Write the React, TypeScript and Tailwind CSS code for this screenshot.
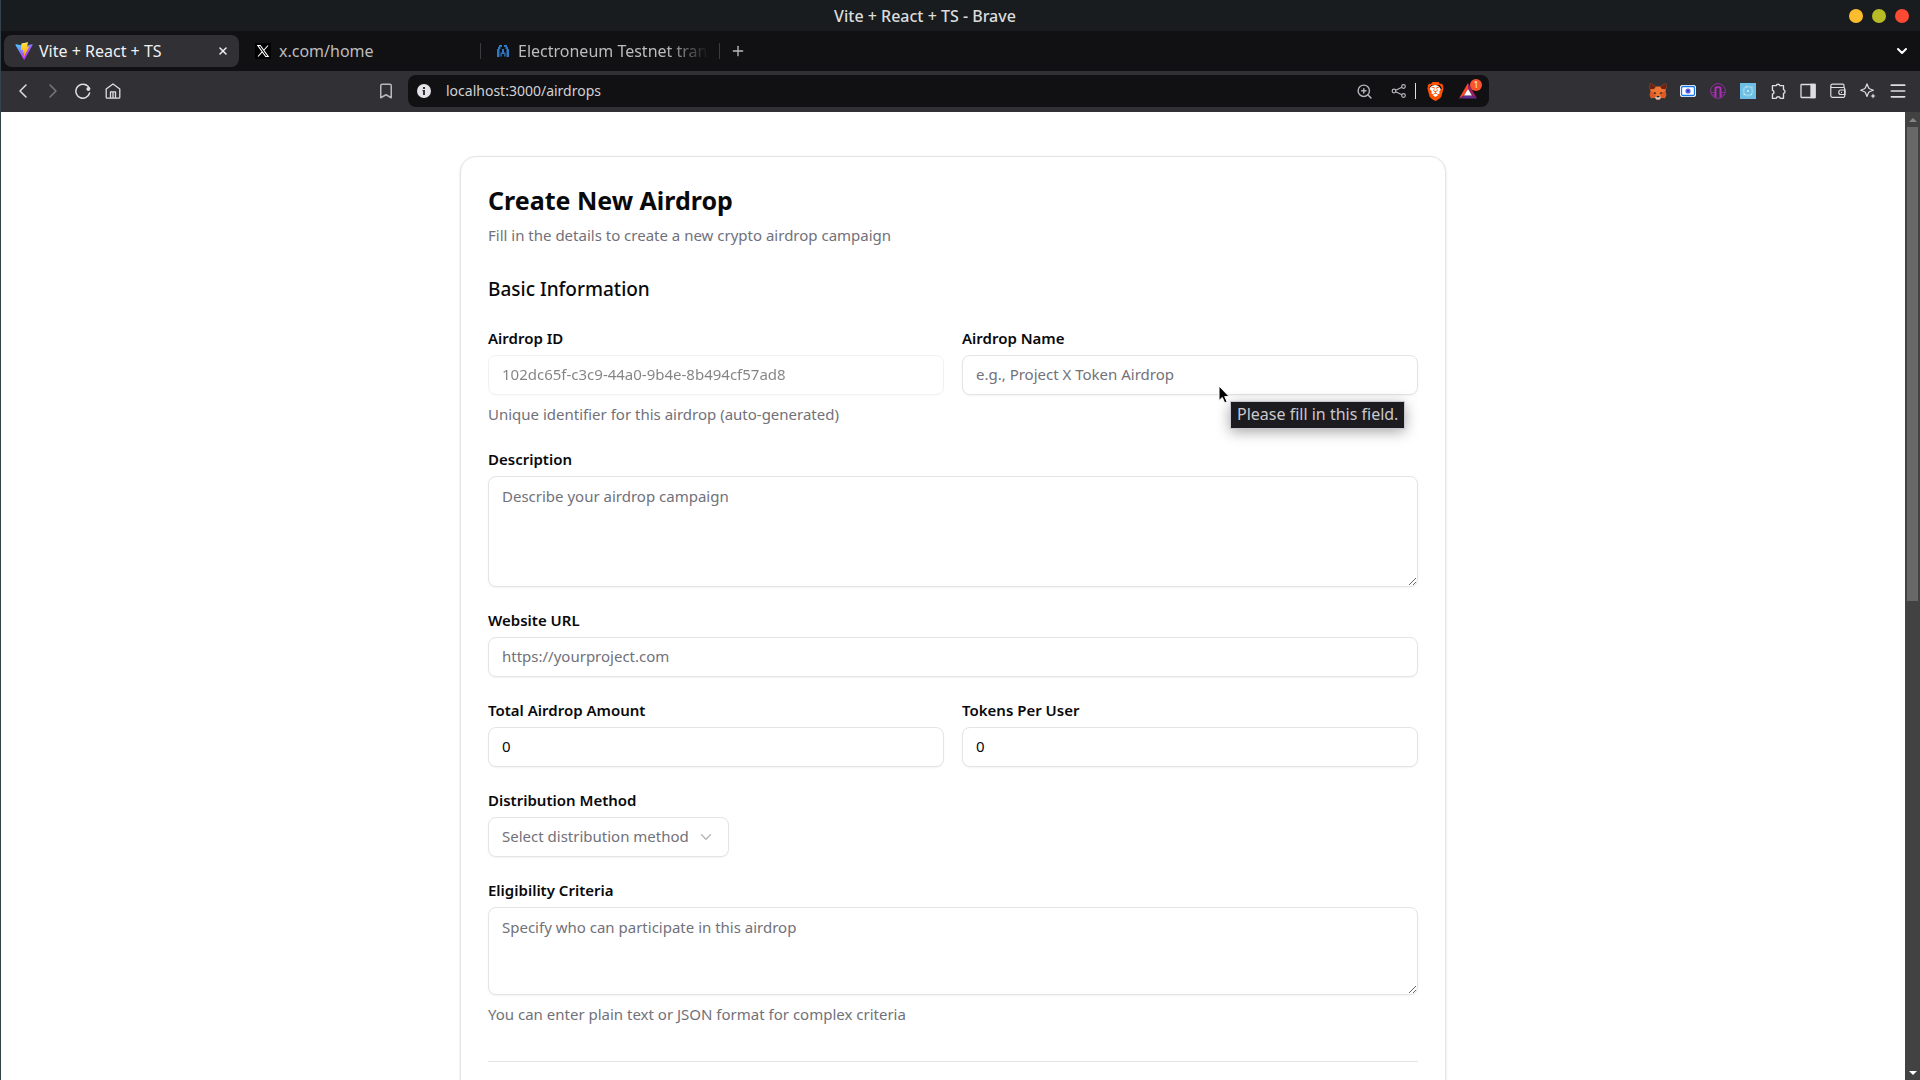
import React, { useState } from 'react';
import { Bookmark, ChevronDown, ChevronLeft, ChevronRight, Menu, Plus, X, ZoomIn } from 'lucide-react';
import { SiBrave } from 'react-icons/si';

const ViteIcon = () => (
  <svg viewBox="0 0 32 32" className="size-[18px] shrink-0">
    <defs>
      <linearGradient id="viteA" x1="6" y1="33" x2="235" y2="344" gradientTransform="translate(1.34 1.89) scale(.07142857)" gradientUnits="userSpaceOnUse">
        <stop offset="0" stopColor="#41d1ff" />
        <stop offset="1" stopColor="#bd34fe" />
      </linearGradient>
      <linearGradient id="viteB" x1="194.651" y1="8.818" x2="236.076" y2="292.989" gradientTransform="translate(1.34 1.89) scale(.07142857)" gradientUnits="userSpaceOnUse">
        <stop offset="0" stopColor="#ffea83" />
        <stop offset=".083" stopColor="#ffdd35" />
        <stop offset="1" stopColor="#ffa800" />
      </linearGradient>
    </defs>
    <path fill="url(#viteA)" d="M31.3 5.2 16.9 31.2c-.3.5-1.1.5-1.4 0L.8 5.2c-.3-.6.2-1.3.8-1.2l14.4 2.6L30.5 4c.6-.1 1.1.6.8 1.2z" />
    <path fill="url(#viteB)" d="M22.8.6 11.6 2.8a.4.4 0 0 0-.3.4l-.6 11c0 .3.2.5.5.4l3-.7c.3-.1.5.2.4.5l-.9 4.3c-.1.3.2.6.5.5l1.9-.6c.3-.1.5.2.5.5l-1.4 6.8c-.1.4.4.6.7.3l.2-.3L24.8 8.800c.1-.3-.1-.6-.4-.6l-3.1.6c-.3.1-.5-.2-.4-.5L23.2 1.100c.1-.3-.1-.5-.4-.5z" />
  </svg>
);

const XLogo = () => (
  <svg viewBox="0 0 16 16" className="size-4 shrink-0" fill="none" stroke="#fff">
    <rect width="16" height="16" fill="#000" stroke="none" />
    <path d="M2.800 2.500H5.300L13.200 13.500H10.700zM13 2.500 9 7M7 9.200 3 13.500" strokeWidth="1.100" />
  </svg>
);

const ElectroneumIcon = () => (
  <svg viewBox="0 0 14 14" className="size-[14px] shrink-0" fill="#2f78c4">
    <path d="M3 1h3v2H4.500v2H3.500v8H1V5h1V3h1zM11 1H8v2h1.500v2h1v8H13V5h-1V3h-1z" />
    <path d="M6 5h2v5H6zM4.500 8.500h1.300v4H4.500zM8.200 8.500h1.300v4H8.200z" />
  </svg>
);

const ReloadIcon = () => (
  <svg viewBox="0 0 18 18" className="size-[18px]" fill="none" stroke="currentColor" strokeWidth="1.500" strokeLinecap="round">
    <path d="M12.500 3.200A7 7 0 1 0 15.600 11" />
    <path d="M11.500 2.600c2 .8 3.400 2.200 4.200 4.200" />
    <circle cx="14.300" cy="7" r="1.900" fill="currentColor" stroke="none" />
  </svg>
);

const HomeIcon = () => (
  <svg viewBox="0 0 16 16" className="size-4" fill="none" stroke="currentColor" strokeWidth="1.300" strokeLinejoin="round">
    <path d="M1.200 6 8 .9 14.800 6v8.300a.9.9 0 0 1-.9.9H2.100a.9.9 0 0 1-.9-.9z" />
    <path d="M5.500 15V8.800h5V15M8 9v6" />
  </svg>
);

const InfoIcon = () => (
  <svg viewBox="0 0 14 14" className="size-[14px] shrink-0">
    <circle cx="7" cy="7" r="7" fill="#e4e3e6" />
    <path d="M6 3h2v2H6zM5.500 6H8v5H6V7.200h-.5z" fill="#333238" />
  </svg>
);

const ShareIcon = () => (
  <svg viewBox="0 0 16 16" className="size-4" fill="none" stroke="currentColor" strokeWidth="1.200">
    <circle cx="3" cy="8" r="1.800" />
    <circle cx="12.500" cy="3.500" r="1.800" />
    <circle cx="12.500" cy="12.500" r="1.800" />
    <path d="m4.700 7.200 6.200-2.900M4.700 8.800l6.200 2.900" />
  </svg>
);

const BatIcon = () => (
  <svg viewBox="0 0 18 16" className="size-[18px] shrink-0">
    <path d="M9 0v6L5 12.500 0 15.600z" fill="#ff4724" />
    <path d="M9 0v6l4 6.500 5 3.100z" fill="#9e1f63" />
    <path d="m0 15.600 5-3.100h8l5 3.100z" fill="#662d91" />
    <path d="m9 6 4 6.500H5z" fill="#fff" />
  </svg>
);

const FoxIcon = () => (
  <svg viewBox="0 0 16 16" className="size-[18px]">
    <path d="M.8.800 6.500 4h3L15.200.8l.3 4.200-1 3.500.9 3-1.300 3-3.100-.6L9.500 15.500h-3L5 13.900l-3.100.6-1.300-3 .9-3L.5 5z" fill="#f07434" />
    <path d="M.8.800 6.200 4 4.600 6.200 1.300 6.500.5 5zM15.200.8 9.800 4l1.600 2.200 3.300.3.800-1.500z" fill="#6b2411" />
    <path d="M1.500 8.500 5 9l1 4-4 1.500-1.400-3zM14.500 8.500 11 9l-1 4 4 1.500 1.400-3z" fill="#dd5a24" />
    <path d="m4.500 8.800 1.700.8.200 1.100-1.900-.5zM11.500 8.800l-1.700.8-.2 1.100 1.900-.5z" fill="#31221e" />
    <path d="M5.500 13.500 6.800 12.500h2.400l1.300 1-1 2h-3z" fill="#d8c8bd" />
    <path d="M6.900 12.500h2.200l.3 1.100H6.600z" fill="#231c1b" />
  </svg>
);

const CardIcon = () => (
  <svg viewBox="0 0 16 12" className="w-4">
    <rect width="16" height="12" rx="2.500" fill="#fff" />
    <rect x="1.500" y="1.500" width="13" height="9" rx="1.500" fill="#fff" stroke="#1677e8" strokeWidth="1.300" />
    <circle cx="8" cy="6" r="2.600" fill="#5b5fe0" />
    <circle cx="8" cy="6" r="1" fill="#2a2fae" />
  </svg>
);

const ArchIcon = () => (
  <svg viewBox="0 0 16 16" className="size-4" fill="none" stroke="#9a2fa8">
    <circle cx="8" cy="8" r="7.400" strokeWidth=".9" />
    <path d="M5.500 14.500V5.200a1 1 0 0 1 1-1h3a1 1 0 0 1 1 1v9.300" stroke="#b02fb8" strokeWidth="2" />
    <path d="M1 9.500h4M11 9.500h4M2 12h3M11 12h3" strokeWidth=".8" />
  </svg>
);

const CrystalIcon = () => (
  <svg viewBox="0 0 16 16" className="size-4">
    <rect width="16" height="16" fill="#6dbde6" />
    <circle cx="8" cy="8" r="4.500" fill="none" stroke="#8fd2ea" strokeWidth="2" />
    <path d="M8 7v2M7 8h2M11.500 4h1M11 11.500h1M3.500 11.500h1.500M6 4h1" stroke="#d4f3f6" />
  </svg>
);

const PuzzleIcon = () => (
  <svg viewBox="0 0 16 16" className="size-[17px]" fill="none" stroke="currentColor" strokeWidth="1.300" strokeLinejoin="round">
    <path d="M2.300 2.500h3.500a1.800 1.800 0 0 1 3.500 0h3.400v3.700a1.850 1.850 0 0 1 0 3.600v4.700H9.700a2 2 0 0 0-3.900 0H2.300v-4a1.900 1.900 0 0 0 0-3.700z" />
  </svg>
);

const SidebarIcon = () => (
  <svg viewBox="0 0 16 16" className="size-4" fill="none" stroke="currentColor" strokeWidth="1.300">
    <rect x="1" y="1.500" width="14" height="13" rx=".6" />
    <path d="M11 1.500h4v13h-4z" fill="currentColor" />
  </svg>
);

const WalletIcon = () => (
  <svg viewBox="0 0 16 16" className="size-4" fill="none" stroke="currentColor" strokeWidth="1.200">
    <path d="M14 4.500v-2a1.300 1.300 0 0 0-1.300-1.300H2.300A1.500 1.500 0 0 0 .8 2.700v10.100a1.500 1.500 0 0 0 1.500 1.500h11.200a1.200 1.200 0 0 0 1.200-1.200V5.700a1.200 1.200 0 0 0-1.200-1.200H2.300A1.500 1.500 0 0 1 .8 3" />
    <path d="M15 7h-4.200a2 2 0 0 0-2 2v.5a2 2 0 0 0 2 2H15zM11 9.300h1" />
  </svg>
);

const LeoIcon = () => (
  <svg viewBox="0 0 16 16" className="size-4" fill="none" stroke="currentColor" strokeWidth="1.200" strokeLinejoin="round">
    <path d="M7 .9 8.600 4.800a1.500 1.500 0 0 0 .9.9L13.400 7.200 9.500 8.700a1.500 1.500 0 0 0-.9.9L7 13.500 5.400 9.600a1.500 1.500 0 0 0-.9-.9L.7 7.200l3.800-1.500a1.500 1.500 0 0 0 .9-.9z" />
    <path d="m13 10.300.8 1.900 1.900.8-1.900.8-.8 1.900-.8-1.900-1.900-.8 1.900-.8z" fill="currentColor" stroke="none" />
  </svg>
);

const extensions = [
  { name: 'MetaMask', icon: <FoxIcon /> },
  { name: 'Wallet card', icon: <CardIcon /> },
  { name: 'Arch', icon: <ArchIcon /> },
  { name: 'Crystal', icon: <CrystalIcon /> },
  { name: 'Extensions', icon: <PuzzleIcon /> },
  { name: 'Sidebar', icon: <SidebarIcon /> },
  { name: 'Wallet', icon: <WalletIcon /> },
  { name: 'Leo AI', icon: <LeoIcon /> },
  { name: 'Menu', icon: <Menu className="size-5" strokeWidth={2} /> },
];

const TitleBar = () => (
  <div className="flex h-[31px] shrink-0 items-center bg-[#181c1f] pr-[11px] text-base font-medium text-[#dcdcdc]">
    <span className="flex-1 text-center">Vite + React + TS - Brave</span>
    <div className="flex gap-[9px]">
      <button aria-label="Minimize" className="size-[14px] rounded-full bg-[#fdbc2e]" />
      <button aria-label="Maximize" className="size-[14px] rounded-full bg-[#b8bb26]" />
      <button aria-label="Close" className="size-[14px] rounded-full bg-[#fb4934]" />
    </div>
  </div>
);

const TabStrip = () => (
  <div className="flex h-10 shrink-0 items-center bg-[#111113] pl-[3px] text-base text-[#bcbcbe]">
    <div className="flex h-8 w-[235px] items-center gap-[6px] rounded-lg bg-[#313035] pr-2 pl-[11px] text-[#f0f0f2]">
      <ViteIcon />
      <span className="flex-1">Vite + React + TS</span>
      <button aria-label="Close tab" className="flex size-4 items-center justify-center">
        <X className="size-3" strokeWidth={3} />
      </button>
    </div>
    <div className="flex h-8 w-[241px] items-center gap-2 pl-4">
      <XLogo />
      <span>x.com/home</span>
    </div>
    <div className="h-4 w-px bg-[#3b3a40]" />
    <div className="flex h-8 w-[238px] items-center gap-2 pr-1 pl-[15px]">
      <ElectroneumIcon />
      <span className="flex-1 mask-r-from-75% mask-r-to-97% whitespace-nowrap">Electroneum Testnet trans</span>
    </div>
    <div className="h-4 w-px bg-[#3b3a40]" />
    <button aria-label="New tab" className="ml-2 flex size-5 items-center justify-center">
      <Plus className="size-4" strokeWidth={2} />
    </button>
    <button aria-label="Search tabs" className="mr-[10px] ml-auto text-white">
      <ChevronDown className="size-4" strokeWidth={3} />
    </button>
  </div>
);

const Toolbar = () => (
  <div className="grid h-[41px] shrink-0 grid-cols-[407px_1fr_431px] items-center bg-[#313035] pb-px text-[#dedde1]">
    <div className="flex items-center px-[7px]">
      <button aria-label="Back" className="flex w-[30px] justify-center"><ChevronLeft className="size-6" strokeWidth={1.500} /></button>
      <button aria-label="Forward" className="flex w-[30px] justify-center text-[#78777c]"><ChevronRight className="size-6" strokeWidth={1.500} /></button>
      <button aria-label="Reload" className="flex w-[30px] justify-center"><ReloadIcon /></button>
      <button aria-label="Home" className="flex w-[30px] justify-center"><HomeIcon /></button>
      <button aria-label="Bookmark" className="ml-auto flex w-[30px] justify-center text-[#b9b8bd]"><Bookmark className="size-[18px]" strokeWidth={2} /></button>
    </div>
    <div className="flex h-8 items-center rounded-lg bg-[#111113] pr-2 pl-[9px]">
      <InfoIcon />
      <input
        aria-label="Address"
        defaultValue="localhost:3000/airdrops"
        className="ml-[15px] min-w-0 flex-1 bg-transparent text-sm text-[#d2d2d6] outline-none"
      />
      <div className="flex items-center text-[#b5b4ba]">
        <button aria-label="Zoom" className="mr-[18px]"><ZoomIn className="size-[17px]" strokeWidth={2} /></button>
        <button aria-label="Share" className="mr-2"><ShareIcon /></button>
        <span className="mr-[9px] h-4 w-px bg-[#dedde1]" />
        <button aria-label="Brave Shields" className="relative mr-[14px] flex size-5 items-center justify-center text-[#ff5000]">
          <span className="absolute inset-[4px] rounded-full bg-white" />
          <SiBrave className="relative size-[19px]" />
        </button>
        <button aria-label="Brave Rewards" className="relative flex h-7 w-[22px] items-center">
          <BatIcon />
          <span className="absolute top-[2px] -right-px flex size-3 items-center justify-center rounded-full bg-[#fb542b] text-[8px] text-white">1</span>
        </button>
      </div>
    </div>
    <div className="flex justify-end pr-[7px]">
      {extensions.map((ext) => (
        <button key={ext.name} aria-label={ext.name} className="flex h-5 w-[30px] items-center justify-center">
          {ext.icon}
        </button>
      ))}
    </div>
  </div>
);

const Scrollbar = () => (
  <div className="flex w-[15px] shrink-0 flex-col items-center bg-[#424242]">
    <div className="flex h-[15px] items-center">
      <svg viewBox="0 0 8 4" className="w-2"><path d="M4 0l4 4H0z" fill="#868686" /></svg>
    </div>
    <div className="h-[49%] w-[11px] bg-[#686868]" />
    <div className="mt-auto flex h-[15px] items-center">
      <svg viewBox="0 0 8 4" className="w-2"><path d="M4 4L0 0h8z" fill="#fff" /></svg>
    </div>
  </div>
);

const controlClass =
  'block w-full rounded-lg border border-[#e4e4e7] bg-white px-[13px] text-[15px] text-[#09090b] shadow-xs outline-none placeholder:text-[#71717a]';

interface FieldProps {
  id: string;
  label: string;
  help?: string;
  children: React.ReactNode;
}

const Field: React.FC<FieldProps> = ({ id, label, help, children }) => (
  <div className="flex flex-col gap-[9px]">
    <label htmlFor={id} className="text-[15px] leading-[15px] font-semibold text-[#09090b]">{label}</label>
    {children}
    {help && <p className="pb-[2px] text-[15px] leading-[20px] text-[#71717a]">{help}</p>}
  </div>
);

const FieldTooltip = () => (
  <>
    <svg viewBox="0 0 12 19" className="absolute top-[30px] left-[256px] w-3">
      <path d="M1 1v14.500l3.300-3 2.400 5.300 2.400-1.100-2.400-5.100h4.500z" fill="#000" stroke="#fff" strokeWidth="1" />
    </svg>
    <div role="tooltip" className="absolute top-[46px] left-[268px] border border-[#c9c6d0] bg-[#1c1b20] px-[6px] pb-[2px] text-base leading-[24px] whitespace-nowrap text-[#c9c8cc] shadow-[0_3px_14px_rgba(0,0,0,0.35)]">
      Please fill in this field.
    </div>
  </>
);

const AirdropForm = () => {
  const [total, setTotal] = useState('0');
  const [perUser, setPerUser] = useState('0');

  return (
    <form className="mx-auto mt-11 w-full max-w-[986px] rounded-2xl border border-[#e4e4e7] bg-white px-[27px] py-[26px] shadow-sm">
      <h1 className="text-[25px] leading-[35px] font-bold text-[#09090b]">Create New Airdrop</h1>
      <p className="mt-[7px] pb-[2px] text-[15px] leading-[20px] text-[#71717a]">Fill in the details to create a new crypto airdrop campaign</p>

      <div className="mt-[26px] flex flex-col gap-[26px]">
        <h2 className="text-[19px] leading-[32px] font-medium text-[#09090b]">Basic Information</h2>

        <div className="grid grid-cols-2 gap-[18px]">
          <Field id="airdropId" label="Airdrop ID" help="Unique identifier for this airdrop (auto-generated)">
            <input id="airdropId" disabled value="102dc65f-c3c9-44a0-9b4e-8b494cf57ad8" className={`${controlClass} h-10 pb-[2px] opacity-50`} />
          </Field>
          <Field id="airdropName" label="Airdrop Name">
            <div className="relative">
              <input id="airdropName" required placeholder="e.g., Project X Token Airdrop" className={`${controlClass} h-10 pb-[2px]`} />
              <FieldTooltip />
            </div>
          </Field>
        </div>

        <Field id="description" label="Description">
          <textarea id="description" placeholder="Describe your airdrop campaign" className={`${controlClass} h-[111px] resize-y py-2 leading-[22px]`} />
        </Field>

        <Field id="website" label="Website URL">
          <input id="website" type="url" placeholder="https://yourproject.com" className={`${controlClass} h-10 pb-[2px]`} />
        </Field>

        <div className="grid grid-cols-2 gap-[18px]">
          <Field id="total" label="Total Airdrop Amount">
            <input id="total" type="number" value={total} onChange={(e) => setTotal(e.target.value)} className={`${controlClass} h-10 pb-[2px]`} />
          </Field>
          <Field id="perUser" label="Tokens Per User">
            <input id="perUser" type="number" value={perUser} onChange={(e) => setPerUser(e.target.value)} className={`${controlClass} h-10 pb-[2px]`} />
          </Field>
        </div>

        <Field id="method" label="Distribution Method">
          <div className="relative w-[241px]">
            <select id="method" defaultValue="" className="block h-10 w-full appearance-none rounded-lg border border-[#e4e4e7] bg-white px-[13px] pb-[2px] text-[15px] text-[#71717a] shadow-xs outline-none">
              <option value="">Select distribution method</option>
            </select>
            <ChevronDown className="pointer-events-none absolute top-[11px] right-[14px] size-[18px] text-[#b8b8bc]" strokeWidth={2} />
          </div>
        </Field>

        <Field id="criteria" label="Eligibility Criteria" help="You can enter plain text or JSON format for complex criteria">
          <textarea id="criteria" placeholder="Specify who can participate in this airdrop" className={`${controlClass} h-[88px] resize-y py-2 leading-[22px]`} />
        </Field>
      </div>

      <hr className="mt-[35px] mb-11 border-[#e4e4e7]" />
    </form>
  );
};

export default function App() {
  return (
    <div className="flex h-screen flex-col overflow-hidden border-l border-[#34424c] bg-white font-['Noto_Sans','Open_Sans',sans-serif]">
      <TitleBar />
      <TabStrip />
      <Toolbar />
      <div className="flex min-h-0 flex-1">
        <main className="min-w-0 flex-1 overflow-hidden">
          <AirdropForm />
        </main>
        <Scrollbar />
      </div>
    </div>
  );
}
